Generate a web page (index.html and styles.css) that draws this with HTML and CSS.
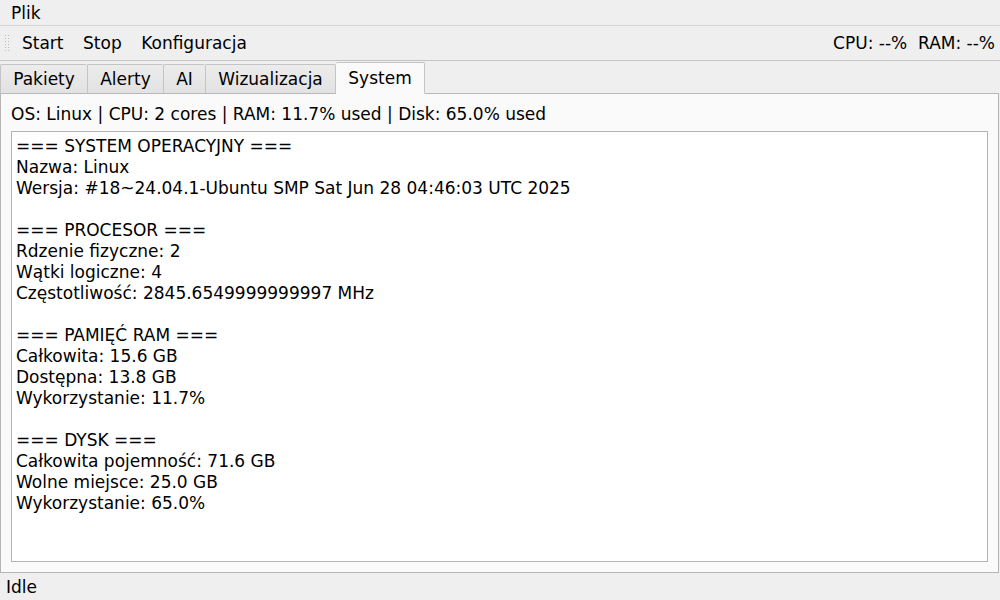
FILE: index.html
```html
<!DOCTYPE html>
<html lang="pl">
<head>
<meta charset="utf-8">
<title>Monitor</title>
<link rel="stylesheet" href="styles.css">
</head>
<body>
<div class="window">
  <div class="menubar"><span class="menu-item">Plik</span></div>
  <div class="toolbar">
    <div class="grip"></div>
    <span class="tool">Start</span>
    <span class="tool">Stop</span>
    <span class="tool">Konfiguracja</span>
    <span class="spacer"></span>
    <span class="stats">CPU: --%&nbsp; RAM: --%</span>
  </div>
  <div class="tabbar">
    <div class="tab">Pakiety</div>
    <div class="tab">Alerty</div>
    <div class="tab">AI</div>
    <div class="tab">Wizualizacja</div>
    <div class="tab active">System</div>
  </div>
  <div class="pane">
    <div class="summary">OS: Linux | CPU: 2 cores | RAM: 11.7% used | Disk: 65.0% used</div>
    <div class="textbox"><pre class="info">=== SYSTEM OPERACYJNY ===
Nazwa: Linux
Wersja: #18~24.04.1-Ubuntu SMP Sat Jun 28 04:46:03 UTC 2025

=== PROCESOR ===
Rdzenie fizyczne: 2
Wątki logiczne: 4
Częstotliwość: 2845.6549999999997 MHz

=== PAMIĘĆ RAM ===
Całkowita: 15.6 GB
Dostępna: 13.8 GB
Wykorzystanie: 11.7%

=== DYSK ===
Całkowita pojemność: 71.6 GB
Wolne miejsce: 25.0 GB
Wykorzystanie: 65.0%</pre></div>
  </div>
  <div class="statusbar">Idle</div>
</div>
</body>
</html>
```
FILE: styles.css
```css
* { box-sizing: border-box; }
html, body { margin: 0; padding: 0; }
body {
  width: 1000px;
  height: 600px;
  overflow: hidden;
  background: #efefef;
  font-family: "DejaVu Sans", sans-serif;
  font-size: 17px;
  color: #000;
}
.window {
  display: flex;
  flex-direction: column;
  height: 600px;
}
.menubar {
  height: 26px;
  display: flex;
  align-items: center;
  border-bottom: 1px solid #d6d6d6;
  background: #efefef;
}
.menu-item { padding: 0 11px; }
.toolbar {
  height: 35px;
  display: flex;
  align-items: center;
  border-bottom: 1px solid #c4c4c4;
  background: #efefef;
  padding-right: 5px;
}
.grip {
  width: 5px;
  height: 19px;
  margin: 0 13px 0 4px;
  background-image: radial-gradient(circle, #b8b8b8 0.8px, transparent 1px);
  background-size: 3px 3px;
}
.tool { margin-right: 19.5px; }
.spacer { flex: 1; }
.stats { white-space: pre; }
.tabbar {
  display: flex;
  align-items: flex-end;
  height: 33px;
  padding-top: 1px;
  margin-bottom: -1px;
  position: relative;
  z-index: 1;
}
.tab {
  height: 30px;
  display: flex;
  align-items: center;
  justify-content: center;
  border: 1px solid #c4c4c4;
  border-right: none;
  border-bottom-color: #b8b8b8;
  border-radius: 2px 2px 0 0;
  background: linear-gradient(#ececec, #e2e2e2);
}
.tab:nth-child(4) { border-right: 1px solid #c4c4c4; }
.tab.active {
  height: 32px;
  border: 1px solid #c4c4c4;
  border-bottom: 1px solid #fafafa;
  background: #fafafa;
}
.tab:nth-child(1) { width: 87px; }
.tab:nth-child(2) { width: 76px; }
.tab:nth-child(3) { width: 42px; }
.tab:nth-child(4) { width: 131px; }
.tab:nth-child(5) { width: 89px; border-left: none; }
.pane {
  height: 480px;
  background: #fafafa;
  border: 1px solid #b4b4b4;
  border-top-color: #b8b8b8;
  margin-right: 1px;
  padding: 9px 10px 10px 10px;
  display: flex;
  flex-direction: column;
}
.summary {
  height: 22px;
  line-height: 22px;
  margin-bottom: 6px;
}
.textbox {
  flex: 1;
  background: #fff;
  border: 1px solid #b4b4b4;
  padding: 4px 4px;
  overflow: hidden;
}
.info {
  margin: 0;
  font-family: "DejaVu Sans", sans-serif;
  font-size: 17px;
  line-height: 21px;
  white-space: pre;
}
.statusbar {
  flex: 1;
  display: flex;
  align-items: center;
  padding-left: 6px;
  background: #efefef;
}
```
